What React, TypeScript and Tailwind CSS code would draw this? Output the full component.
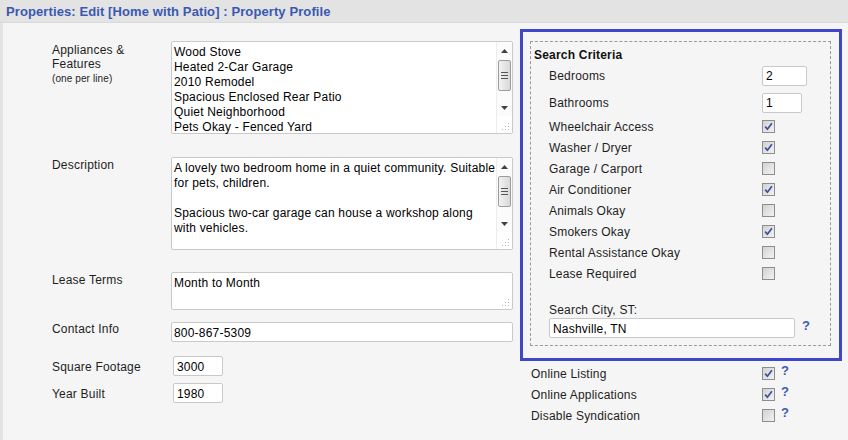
import React from "react";

function Check({ checked }: { checked: boolean }) {
  return (
    <div className="w-[13px] h-[13px] border border-[#8d8d8d] bg-gradient-to-br from-[#d2d2d2] to-[#f2f2f2] flex items-center justify-center shrink-0">
      {checked && (
        <svg width="9" height="9" viewBox="0 0 9 9">
          <path d="M1.2 4.6 L3.4 7.2 L7.9 1.2" fill="none" stroke="#3c4e9e" strokeWidth="1.7" />
        </svg>
      )}
    </div>
  );
}

function Grip() {
  return (
    <svg width="8" height="8" viewBox="0 0 8 8">
      <rect x="6" y="0" width="1" height="1" fill="#b4b4b4" />
      <rect x="3" y="3" width="1" height="1" fill="#b4b4b4" />
      <rect x="6" y="3" width="1" height="1" fill="#b4b4b4" />
      <rect x="0" y="6" width="1" height="1" fill="#b4b4b4" />
      <rect x="3" y="6" width="1" height="1" fill="#b4b4b4" />
      <rect x="6" y="6" width="1" height="1" fill="#b4b4b4" />
    </svg>
  );
}

function Scrollbar() {
  return (
    <div className="w-[16px] flex flex-col bg-[#fbfbfb] border-l border-[#ededed]">
      <div className="h-[17px] flex items-center justify-center">
        <svg width="7" height="4" viewBox="0 0 7 4">
          <path d="M0 4 L3.5 0 L7 4 Z" fill="#404040" />
        </svg>
      </div>
      <div className="mt-[1px] mx-[1px] h-[31px] rounded-[2px] border border-[#9c9c9c] bg-gradient-to-r from-[#f2f2f2] to-[#d9d9d9] flex flex-col items-center justify-center gap-[2px]">
        <div className="w-[7px] h-[1px] bg-[#555]" />
        <div className="w-[7px] h-[1px] bg-[#555]" />
        <div className="w-[7px] h-[1px] bg-[#555]" />
      </div>
      <div className="flex-1" />
      <div className="h-[17px] flex items-center justify-center">
        <svg width="7" height="4" viewBox="0 0 7 4">
          <path d="M0 0 L7 0 L3.5 4 Z" fill="#404040" />
        </svg>
      </div>
      <div className="h-[17px] flex items-end justify-end pr-[2px] pb-[2px] bg-white">
        <Grip />
      </div>
    </div>
  );
}

function Help() {
  return <span className="text-[13px] font-bold text-[#3a5bb5] leading-none">?</span>;
}

export default function App() {
  const criteria: [string, boolean][] = [
    ["Wheelchair Access", true],
    ["Washer / Dryer", true],
    ["Garage / Carport", false],
    ["Air Conditioner", true],
    ["Animals Okay", false],
    ["Smokers Okay", true],
    ["Rental Assistance Okay", false],
    ["Lease Required", false],
  ];
  const extra: [string, boolean][] = [
    ["Online Listing", true],
    ["Online Applications", true],
    ["Disable Syndication", false],
  ];
  return (
    <div className="w-[848px] h-[440px] bg-[#e3e3e3] flex flex-col font-['Liberation_Sans',Arial,sans-serif] text-[12px] tracking-[0.2px] text-[#1e1e1e] overflow-hidden">
      <div className="h-[23px] pl-[6px] flex items-center border-b border-[#dadada]">
        <span className="text-[13px] font-bold text-[#3a58b2] leading-none tracking-[0.1px] pt-[1px]">
          Properties: Edit [Home with Patio] : Property Profile
        </span>
      </div>
      <div className="flex-1 ml-[3px] bg-[#f5f5f5] flex">
        {/* Left column */}
        <div className="w-[517px] pl-[49px] pt-[18px] flex flex-col">
          <div className="flex items-start">
            <div className="w-[119px] pt-[2px] leading-[14px]">
              <div>Appliances &amp;</div>
              <div>Features</div>
              <div className="text-[10px] mt-[1px] tracking-[0.1px]">(one per line)</div>
            </div>
            <div className="w-[342px] h-[93px] bg-white border border-[#c9c9c9] rounded-[2px] flex">
              <div className="flex-1 pl-[2px] pt-[3px] leading-[15px] text-black">
                <div>Wood Stove</div>
                <div>Heated 2-Car Garage</div>
                <div>2010 Remodel</div>
                <div>Spacious Enclosed Rear Patio</div>
                <div>Quiet Neighborhood</div>
                <div>Pets Okay - Fenced Yard</div>
              </div>
              <Scrollbar />
            </div>
          </div>
          <div className="flex items-start mt-[23px]">
            <div className="w-[119px] leading-[14px] pt-[1px]">Description</div>
            <div className="w-[342px] h-[93px] bg-white border border-[#c9c9c9] rounded-[2px] flex">
              <div className="flex-1 pl-[2px] pt-[3px] leading-[15px] text-black">
                <div>A lovely two bedroom home in a quiet community. Suitable</div>
                <div>for pets, children.</div>
                <div className="h-[15px]" />
                <div>Spacious two-car garage can house a workshop along</div>
                <div>with vehicles.</div>
              </div>
              <Scrollbar />
            </div>
          </div>
          <div className="flex items-start mt-[22px]">
            <div className="w-[119px] leading-[14px] pt-[1px]">Lease Terms</div>
            <div className="w-[342px] h-[38px] bg-white border border-[#c9c9c9] rounded-[2px] flex">
              <div className="flex-1 pl-[2px] pt-[3px] leading-[15px] text-black">Month to Month</div>
              <div className="flex items-end pr-[2px] pb-[2px]">
                <Grip />
              </div>
            </div>
          </div>
          <div className="flex items-start mt-[12px]">
            <div className="w-[119px] leading-[14px]">Contact Info</div>
            <div className="w-[342px] h-[20px] bg-white border border-[#c9c9c9] rounded-[2px] pl-[2px] pt-[1px] flex items-center text-black">
              800-867-5309
            </div>
          </div>
          <div className="flex items-center mt-[14px]">
            <div className="w-[121px] leading-[14px] pt-[1px]">Square Footage</div>
            <div className="w-[50px] h-[20px] bg-white border border-[#c9c9c9] rounded-[2px] pl-[3px] pt-[1px] flex items-center text-black">
              3000
            </div>
          </div>
          <div className="flex items-center mt-[7px]">
            <div className="w-[121px] leading-[14px] pt-[1px]">Year Built</div>
            <div className="w-[50px] h-[20px] bg-white border border-[#c9c9c9] rounded-[2px] pl-[3px] pt-[1px] flex items-center text-black">
              1980
            </div>
          </div>
        </div>

        {/* Right column */}
        <div className="pt-[6px] flex flex-col">
          <div className="w-[322px] border-[3px] border-[#3f47c8] pl-[7px] pr-[8px] pt-[9px] pb-[12px]">
            <div className="border border-dashed border-[#9a9a9a] pl-[3px] pt-[6px] pb-[7px]">
              <div className="font-bold leading-[14px] text-[#111]">Search Criteria</div>
              <div className="pl-[15px]">
                <div className="h-[27px] flex items-center">
                  <div className="w-[213px] pt-[1px]">Bedrooms</div>
                  <div className="w-[45px] h-[20px] bg-white border border-[#c9c9c9] rounded-[2px] pl-[3px] pt-[1px] flex items-center text-black">2</div>
                </div>
                <div className="h-[27px] flex items-center">
                  <div className="w-[213px] pt-[1px]">Bathrooms</div>
                  <div className="w-[40px] h-[20px] bg-white border border-[#c9c9c9] rounded-[2px] pl-[3px] pt-[1px] flex items-center text-black">1</div>
                </div>
                {criteria.map(([label, c]) => (
                  <div key={label} className="h-[21px] flex items-center">
                    <div className="w-[213px] pt-[1px]">{label}</div>
                    <Check checked={c} />
                  </div>
                ))}
                <div className="mt-[19px] leading-[14px]">Search City, ST:</div>
                <div className="mt-[1px] flex items-center">
                  <div className="w-[246px] h-[20px] bg-white border border-[#c9c9c9] rounded-[2px] pl-[3px] pt-[1px] flex items-center text-black">
                    Nashville, TN
                  </div>
                  <div className="ml-[7px] -mt-[4px]">
                    <Help />
                  </div>
                </div>
              </div>
            </div>
          </div>
          <div className="mt-[2px] pl-[11px]">
            {extra.map(([label, c]) => (
              <div key={label} className="h-[21px] flex items-center">
                <div className="w-[231px] pt-[1px]">{label}</div>
                <Check checked={c} />
                <div className="ml-[6px] -mt-[5px]">
                  <Help />
                </div>
              </div>
            ))}
          </div>
        </div>
      </div>
    </div>
  );
}
